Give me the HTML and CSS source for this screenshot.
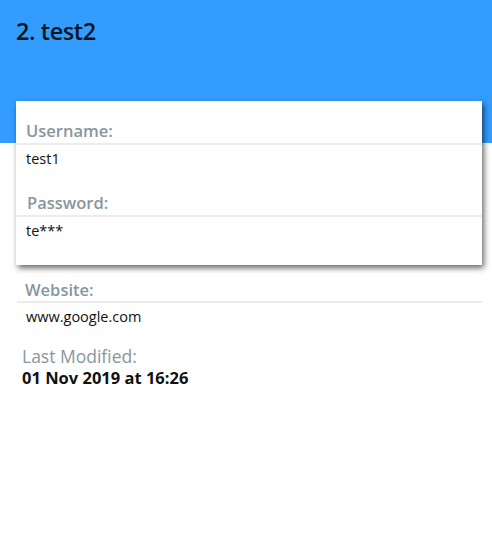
FILE: index.html
```html
<!DOCTYPE html>
<html>
<head>
<meta charset="utf-8">
<link rel="stylesheet" href="styles.css">
</head>
<body>
<div class="page">
  <h1 class="title">2. test2</h1>
  <div class="card">
    <div class="field">
      <div class="label">Username:</div>
      <div class="value">test1</div>
    </div>
    <div class="field field-2">
      <div class="label">Password:</div>
      <div class="value">te***</div>
    </div>
  </div>
  <div class="field plain">
    <div class="label">Website:</div>
    <div class="value">www.google.com</div>
  </div>
  <div class="modified">
    <div class="mod-label">Last Modified:</div>
    <div class="mod-value">01 Nov 2019 at 16:26</div>
  </div>
</div>
</body>
</html>
```

FILE: styles.css
```css
html, body {
  margin: 0;
  padding: 0;
  background: #fff;
}
body {
  font-family: "Open Sans", "Noto Sans", sans-serif;
  color: #111;
}
.page {
  width: 492px;
  min-height: 539px;
  background: linear-gradient(to bottom, #339dff 0, #339dff 143px, #fff 143px);
  padding-top: 1px;
}
.title {
  margin: 14px 0 0 16px;
  font-size: 23.5px;
  font-weight: 600;
  letter-spacing: -0.4px;
  line-height: 32px;
  color: #0a1520;
}
.card {
  margin: 54px 10px 0 16px;
  background: #fff;
  box-shadow: 2px 3px 6px rgba(0,0,0,0.6);
  padding: 18px 0 24px 0;
}
.field .label {
  padding-left: 10px;
  font-size: 16.5px;
  font-weight: 600;
  color: #8796a1;
  line-height: 24px;
}
.field .value {
  border-top: 2px solid #ececec;
  padding: 4px 0 0 10px;
  font-size: 14.5px;
  line-height: 20px;
  color: #111;
}
.field-2 {
  margin-top: 22px;
}
.field-2 .label {
  padding-left: 11px;
}
.plain {
  margin: 14px 10px 0 17px;
}
.plain .label {
  padding-left: 8px;
  line-height: 22px;
}
.plain .value {
  padding-left: 9px;
}
.modified {
  margin: 18px 0 0 22px;
}
.mod-label {
  font-size: 17.5px;
  color: #8796a1;
  line-height: 23px;
}
.mod-value {
  font-size: 16.5px;
  font-weight: 700;
  line-height: 19px;
  color: #111;
}
```
